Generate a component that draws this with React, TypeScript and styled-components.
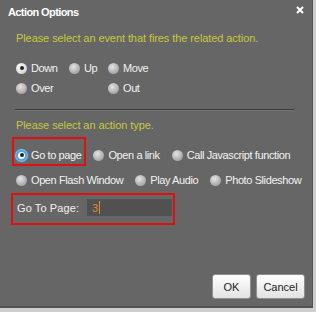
import React from 'react';
import styled, { createGlobalStyle, css } from 'styled-components';

const GlobalStyle = createGlobalStyle`
  html, body { margin: 0; padding: 0; background: #cfcfcf; }
  body { font-family: 'Liberation Sans', Arial, sans-serif; }
`;

const Frame = styled.div`
  width: 316px;
  height: 312px;
  background: #cfcfcf;
`;

const Dialog = styled.div`
  width: 313px;
  height: 308px;
  box-sizing: border-box;
  background: #666666;
  border-right: 1px solid #525252;
  border-bottom: 2px solid #525252;
  display: flex;
  flex-direction: column;
  color: #f2f2f2;
  font-size: 11px;
`;

const TitleBar = styled.div`
  height: 24px;
  display: flex;
  align-items: center;
  justify-content: space-between;
  padding: 0 8px 0 8px;
`;

const Title = styled.div`
  font-weight: bold;
  font-size: 11px;
  letter-spacing: -0.6px;
  color: #ffffff;
  margin-top: -1px;
`;

const CloseBtn = styled.span`
  display: inline-flex;
  margin-top: -4px;
`;

const Content = styled.div`
  padding: 0 18px 0 16px;
  display: flex;
  flex-direction: column;
  flex: 1;
`;

const Prompt = styled.div<{ top: number }>`
  margin-top: ${({ top }) => top}px;
  color: #c9c83a;
  line-height: 14px;
  letter-spacing: -0.08px;
`;

const EventGrid = styled.div`
  margin-top: 15px;
  display: grid;
  grid-template-columns: 53px 39px auto;
  row-gap: 4px;
`;

const ActionRow = styled.div<{ top: number }>`
  margin-top: ${({ top }) => top}px;
  display: flex;
  gap: 12px;
`;

const Option = styled.label<{ col?: number }>`
  position: relative;
  display: inline-flex;
  align-items: center;
  gap: 4px;
  height: 16px;
  white-space: nowrap;
  letter-spacing: -0.4px;
  ${({ col }) => col && css`grid-column: ${col};`}
`;

const Mark = styled.span`
  position: absolute;
  left: -4px;
  top: -10px;
  right: -5px;
  bottom: -3px;
  border: 2px solid #e01010;
  pointer-events: none;
`;

const Dot = styled.span<{ checked?: boolean; focused?: boolean }>`
  width: 11px;
  height: 11px;
  border-radius: 50%;
  box-sizing: border-box;
  flex: none;
  display: inline-flex;
  align-items: center;
  justify-content: center;
  background: radial-gradient(circle at 40% 35%, #e4e4e4 0%, #b4b4b4 55%, #8e8e8e 100%);
  ${({ checked }) => checked && css`
    background: radial-gradient(circle at 40% 35%, #ffffff 0%, #dcdcdc 60%, #b0b0b0 100%);
    &::after {
      content: '';
      width: 4px;
      height: 4px;
      border-radius: 50%;
      background: #222;
    }
  `}
  ${({ focused }) => focused && css`
    background: #ffffff;
    border: 2px solid #4ea3e4;
    box-shadow: 0 0 1px 1px #8cc6f0;
  `}
`;

const Divider = styled.hr`
  margin: 13px 0 0 -1px;
  border: none;
  height: 1px;
  background: #3c3c3c;
  box-shadow: 0 1px 0 #747474;
`;

const FieldRow = styled.div`
  position: relative;
  margin-top: 11px;
  width: 156px;
  height: 17px;
  display: flex;
  align-items: center;
`;

const FieldMark = styled.span`
  position: absolute;
  left: -5px;
  top: -6px;
  right: -3px;
  bottom: -9px;
  border: 2px solid #e01010;
  pointer-events: none;
`;

const FieldLabel = styled.span`
  width: 70px;
  padding-left: 1px;
  letter-spacing: 0.1px;
`;

const Input = styled.div`
  width: 85px;
  height: 17px;
  background: #515151;
  display: flex;
  align-items: center;
  padding-left: 5px;
  box-sizing: border-box;
  color: #e0892e;
`;

const Caret = styled.span`
  width: 1px;
  height: 13px;
  background: #e0892e;
  margin-left: 1px;
`;

const Footer = styled.div`
  margin-top: auto;
  display: flex;
  justify-content: flex-end;
  gap: 5px;
  padding: 0 7px 7px 0;
`;

const Button = styled.button<{ w: number }>`
  width: ${({ w }) => w}px;
  height: 25px;
  border: 1px solid #8f8f8f;
  border-radius: 3px;
  background: linear-gradient(#ffffff, #e2e2e2);
  color: #222;
  font-family: 'Liberation Sans', Arial, sans-serif;
  font-size: 11px;
  padding: 0;
`;

const Radio = ({ label, checked, focused, col, marked }: {
  label: string; checked?: boolean; focused?: boolean; col?: number; marked?: boolean;
}) => (
  <Option col={col}>
    <Dot checked={checked} focused={focused} />
    {label}
    {marked && <Mark />}
  </Option>
);

export default function App() {
  return (
    <Frame>
      <GlobalStyle />
      <Dialog>
        <TitleBar>
          <Title>Action Options</Title>
          <CloseBtn>
            <svg width="8" height="8" viewBox="0 0 8 8">
              <path d="M1 1L7 7M7 1L1 7" stroke="#fff" strokeWidth="2" />
            </svg>
          </CloseBtn>
        </TitleBar>
        <Content>
          <Prompt top={7}>Please select an event that fires the related action.</Prompt>
          <EventGrid>
            <Radio label="Down" checked />
            <Radio label="Up" />
            <Radio label="Move" />
            <Radio label="Over" />
            <Radio label="Out" col={3} />
          </EventGrid>
          <Divider />
          <Prompt top={8}>Please select an action type.</Prompt>
          <ActionRow top={15}>
            <Radio label="Go to page" checked focused marked />
            <Radio label="Open a link" />
            <Radio label="Call Javascript function" />
          </ActionRow>
          <ActionRow top={9}>
            <Radio label="Open Flash Window" />
            <Radio label="Play Audio" />
            <Radio label="Photo Slideshow" />
          </ActionRow>
          <FieldRow>
            <FieldLabel>Go To Page:</FieldLabel>
            <Input>3<Caret /></Input>
            <FieldMark />
          </FieldRow>
        </Content>
        <Footer>
          <Button w={39}>OK</Button>
          <Button w={49}>Cancel</Button>
        </Footer>
      </Dialog>
    </Frame>
  );
}
